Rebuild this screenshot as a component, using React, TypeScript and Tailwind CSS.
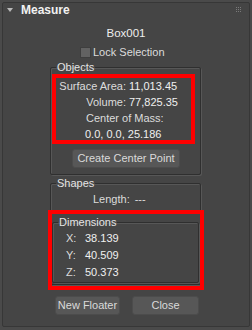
import React from 'react';

const font = { fontFamily: '"Liberation Sans", Arial, sans-serif' };

function GroupBox({
  title,
  className,
  children,
}: {
  title: string;
  className?: string;
  children: React.ReactNode;
}) {
  return (
    <fieldset
      className={`border border-[#2f2f2f] rounded-[2px] shadow-[1px_1px_0_#575757,inset_1px_1px_0_#575757] ${className ?? ''}`}
    >
      <legend className="ml-[5px] px-[1px] h-[14px] leading-[14px] text-[#e4e4e4]">{title}</legend>
      {children}
    </fieldset>
  );
}

function Row({ label, value, labelWidth }: { label: string; value: string; labelWidth: string }) {
  return (
    <div className="flex h-[16px] items-center leading-[16px]">
      <span className={`${labelWidth} text-right`}>{label}</span>
      <span className="ml-[3px] text-[#f0f0f0]">{value}</span>
    </div>
  );
}

function Button({ label, className }: { label: string; className?: string }) {
  return (
    <button
      className={`h-[19px] rounded-[3px] bg-[#575757] border border-[#4c4c4c] text-[#dadada] text-[11px] leading-[17px] ${className ?? ''}`}
    >
      {label}
    </button>
  );
}

export default function App() {
  return (
    <div
      className="relative w-[252px] h-[330px] overflow-hidden bg-[#4a4a4a] p-[2px] text-[11px] text-[#dcdcdc]"
      style={font}
    >
      <div className="h-[325px] border border-[#373737] rounded-[2px] bg-[#454545]">
        {/* rollout title */}
        <div className="flex items-center h-[15px]">
          <svg width="6" height="4" viewBox="0 0 6 4" className="ml-[4px] mt-[-1px]">
            <path d="M0 0H6L3 4Z" fill="#b9b9b9" />
          </svg>
          <span className="ml-[8px] text-[12px] font-bold text-[#f2f2f2] leading-[15px]">Measure</span>
          <svg width="6" height="6" viewBox="0 0 6 6" className="ml-auto mr-[7px] mt-[-2px]">
            {[0, 2, 4].map((x) =>
              [0, 2, 4].map((y) => <rect key={`${x}-${y}`} x={x} y={y} width="1" height="1" fill="#7a7a7a" />)
            )}
          </svg>
        </div>

        <div className="mt-[8px] h-[14px] leading-[14px] text-center text-[#eeeeee] text-[11.5px]">Box001</div>

        <div className="mt-[5px] flex items-center h-[14px] ml-[77px]">
          <span className="w-[11px] h-[11px] bg-[#626262] border border-[#3e3e3e]" />
          <span className="ml-[2px] leading-[14px]">Lock Selection</span>
        </div>

        <GroupBox title="Objects" className="mt-[1px] ml-[47px] w-[151px] pb-[6px]">
          <div className="mt-[4px]">
            <Row label="Surface Area:" value="11,013.45" labelWidth="w-[75px]" />
            <Row label="Volume:" value="77,825.35" labelWidth="w-[75px]" />
            <div className="h-[16px] leading-[16px] pl-[35px]">Center of Mass:</div>
            <div className="h-[16px] leading-[16px] pl-[34px] text-[#f0f0f0]">0.0, 0.0, 25.186</div>
          </div>
          <Button label="Create Center Point" className="mt-[7px] ml-[21px] w-[108px]" />
        </GroupBox>

        <GroupBox title="Shapes" className="mt-[1px] ml-[47px] w-[151px] pb-[1px]">
          <div className="mt-[1px] flex h-[16px] items-center leading-[16px] pl-[42px]">
            <span>Length:</span>
            <span className="ml-[5px]">---</span>
          </div>
          <GroupBox title="Dimensions" className="mt-[8px] mx-[1px] pb-[1px]">
            <div className="mt-[1px]">
              {[
                ['X:', '38.139'],
                ['Y:', '40.509'],
                ['Z:', '50.373'],
              ].map(([k, v]) => (
                <div key={k} className="flex h-[17px] items-center pl-[13px]">
                  <span className="w-[19px]">{k}</span>
                  <span className="text-[#f0f0f0]">{v}</span>
                </div>
              ))}
            </div>
          </GroupBox>
        </GroupBox>

        <div className="mt-[11px] ml-[52px] flex gap-[12px]">
          <Button label="New Floater" className="w-[65px]" />
          <Button label="Close" className="w-[67px]" />
        </div>
      </div>

      {/* red annotation frames */}
      <div className="absolute left-[52px] top-[74px] w-[143px] h-[70px] border-4 border-[#ff0000]" />
      <div className="absolute left-[48px] top-[210px] w-[156px] h-[80px] border-4 border-[#ff0000]" />
    </div>
  );
}
